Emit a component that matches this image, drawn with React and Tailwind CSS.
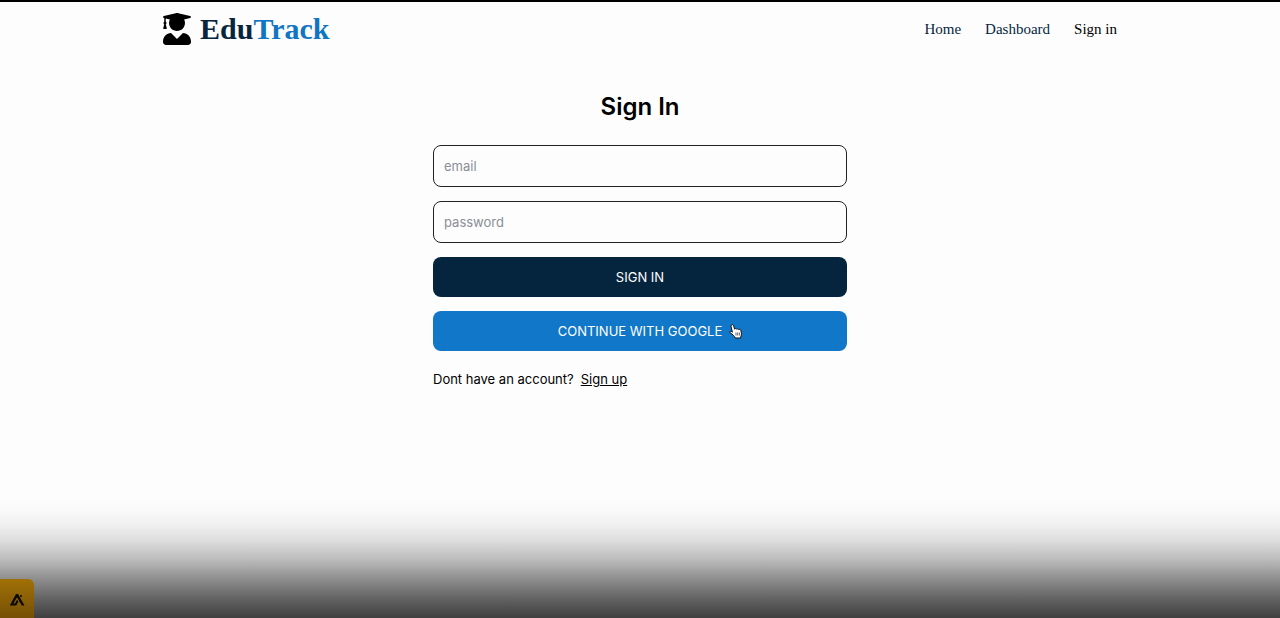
import { FaUserGraduate } from "react-icons/fa";

function Header() {
  return (
    <header className="mx-auto flex w-full max-w-[954px] items-center justify-between font-['Liberation_Serif',serif]">
      <a href="#home" className="flex items-center gap-[9px] py-[11px]">
        <FaUserGraduate className="h-[32px] w-[28px] text-black" aria-hidden="true" />
        <span className="text-[30px] leading-[32px] font-bold text-[#06253f]">
          Edu<span className="text-[#1075c3]">Track</span>
        </span>
      </a>
      <nav className="flex gap-6 text-[15px] text-[#06253f]">
        <a href="#home">Home</a>
        <a href="#dashboard">Dashboard</a>
        <a href="#signin" className="text-black">Sign in</a>
      </nav>
    </header>
  );
}

function PointerHand() {
  return (
    <svg
      viewBox="0 0 14 16"
      className="pointer-events-none absolute top-1/2 left-full ml-[7px] h-4 w-[14px] -translate-y-1/2"
      aria-hidden="true"
    >
      <path
        d="M3.400 9.200 2 3.300C1.700 1.300 4.100.9 4.600 2.600l1 3.500c.5-.8 1.800-.7 2.100.1.6-.6 1.700-.4 2 .4.8-.5 2-.1 2.200.9l.6 3.100c.2 1.600-.8 2.500-.9 4.400H6.300C5.700 13.100 3.600 11.400 1.300 9.800.2 8.900 1.300 7.600 2.500 8.400Z"
        fill="#fff"
        stroke="#111"
        strokeLinejoin="round"
      />
      <path d="M7 9.500v3M8.700 9.500v3M10.400 9.500v3" stroke="#222" strokeWidth=".7" />
    </svg>
  );
}

const fieldClass =
  "w-full rounded-lg border border-[#222222] bg-transparent p-[10px] text-[13px] leading-5 text-black placeholder:text-[#8b8e96]";
const buttonClass =
  "flex w-full items-center justify-center rounded-lg p-[10px] text-[13px] leading-5 text-white uppercase";

function SignInForm() {
  return (
    <main className="mx-auto mt-[35px] w-full max-w-[414px]">
      <h1 className="mb-[22px] text-center text-2xl leading-8 font-semibold">Sign In</h1>
      <form className="flex flex-col gap-[14px]" onSubmit={(e) => e.preventDefault()}>
        <input type="email" aria-label="email" placeholder="email" className={fieldClass} />
        <input type="password" aria-label="password" placeholder="password" className={fieldClass} />
        <button type="submit" className={buttonClass + " bg-[#05253f]"}>
          Sign in
        </button>
        <button type="button" className={buttonClass + " bg-[#1177c8]"}>
          <span className="relative">
            Continue with Google
            <PointerHand />
          </span>
        </button>
      </form>
      <p className="mt-4 flex gap-[7px] text-[13px] leading-6">
        <span>Dont have an account?</span>
        <a href="#signup" className="underline">Sign up</a>
      </p>
    </main>
  );
}

export default function App() {
  return (
    <div className="relative min-h-screen overflow-hidden border-t-2 border-black bg-[#fdfdfd] font-['Inter',sans-serif] text-black">
      <Header />
      <SignInForm />
      <div className="pointer-events-none absolute inset-x-0 bottom-0 h-[130px] bg-[linear-gradient(to_bottom,rgba(0,0,0,0)_8%,rgba(0,0,0,0.015)_18%,rgba(0,0,0,0.05)_28%,rgba(0,0,0,0.12)_40%,rgba(0,0,0,0.26)_55%,rgba(0,0,0,0.44)_70%,rgba(0,0,0,0.62)_86%,rgba(0,0,0,0.75)_100%)]" />
      <button
        type="button"
        aria-label="Open assistant"
        className="absolute bottom-0 left-0 flex h-[39px] w-[34px] items-center justify-center rounded-tr-md bg-linear-to-b from-[#a17106] to-[#765006]"
      >
        <svg viewBox="0 0 16 14" className="mt-[2px] h-[14px] w-4" aria-hidden="true">
          <path d="M7 1h2l6.500 11.500h-2.700L8 4.200 4.400 10.500H6L8 6.800 9.400 8.400 7.200 12.500H.8Z" fill="#0b0903" />
          <circle cx="12" cy="3" r="1" fill="#0b0903" />
        </svg>
      </button>
    </div>
  );
}
